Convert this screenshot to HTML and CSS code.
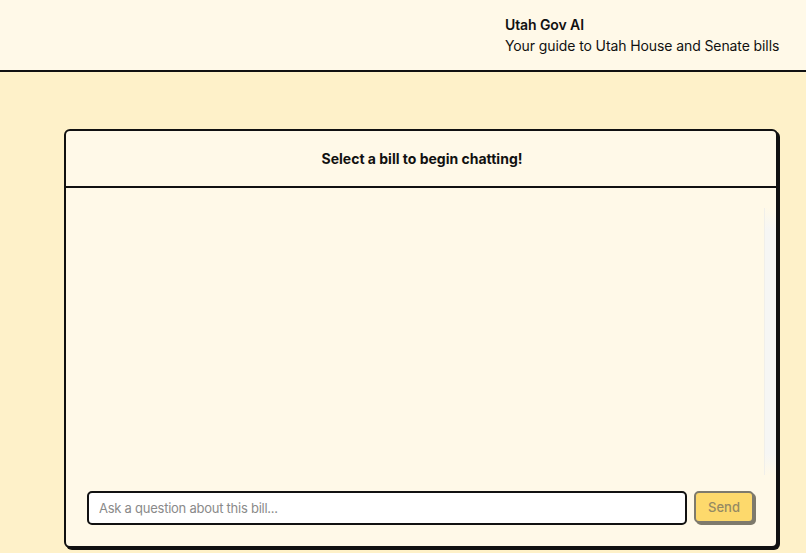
FILE: index.html
```html
<!DOCTYPE html>
<html lang="en">
<head>
  <meta charset="UTF-8" />
  <meta name="viewport" content="width=device-width, initial-scale=1.0"/>
  <title>Utah Gov AI</title>
  <link rel="stylesheet" href="styles.css">
</head>
<body>
  <!-- Top bar -->
  <header class="topbar">
    <div class="brand">
      <div class="brand-name">Utah Gov AI</div>
      <div class="brand-tag">Your guide to Utah House and Senate bills</div>
    </div>
  </header>

  <!-- Chat panel -->
  <main class="page">
    <section class="chat">
      <div class="chat-head">Select a bill to begin chatting!</div>
      <div class="chat-body">
        <div class="messages"></div>
        <div class="scroll-track"></div>
      </div>
      <form class="chat-form">
        <input class="chat-input" type="text" placeholder="Ask a question about this bill...">
        <button class="send-button" type="button" disabled>Send</button>
      </form>
    </section>
  </main>
</body>
</html>
```

FILE: styles.css
```css
* { box-sizing: border-box; margin: 0; padding: 0; }

body {
  font-family: Inter, "Noto Sans", sans-serif;
  background: #fef1c9;
  color: #111;
  height: 100vh;
  overflow: hidden;
}

.topbar {
  height: 72px;
  background: #fff9e8;
  border-bottom: 2px solid #111;
  display: flex;
  padding: 14px 0 0 505px;
}

.brand {
  font-size: 14px;
  line-height: 21px;
  white-space: nowrap;
  letter-spacing: -0.1px;
}

.brand-name { font-weight: 600; }

.page {
  padding: 57px 28px 0 64px;
}

.chat {
  height: 419px;
  background: #fff9e8;
  border: 2px solid #111;
  border-radius: 6px;
  box-shadow: 2px 2px 0 #111;
  display: flex;
  flex-direction: column;
}

.chat-head {
  height: 57px;
  border-bottom: 2px solid #111;
  display: flex;
  align-items: center;
  justify-content: center;
  font-size: 14px;
  font-weight: 700;
  padding-left: 2px;
}

.chat-body {
  flex: 1;
  display: flex;
  padding-top: 20px;
  padding-bottom: 16px;
}

.messages { flex: 1; }

.scroll-track {
  width: 12px;
  background: linear-gradient(to bottom, #fff9e8, #f6f6f4 8%, #f6f6f4 92%, #fff9e8);
  border-left: 1px solid #f0efea;
}

.chat-form {
  display: flex;
  gap: 7px;
  padding: 0 22px 21px 21px;
}

.chat-input {
  flex: 1;
  height: 34px;
  border: 2px solid #111;
  border-radius: 5px;
  background: #fff;
  padding: 0 10px;
  font-family: inherit;
  font-size: 13px;
  letter-spacing: -0.25px;
  color: #111;
  outline: none;
}

.chat-input::placeholder { color: #8a8a8a; }

.send-button {
  width: 60px;
  height: 32px;
  background: #fdd96c;
  border: 2px solid #7e7a6c;
  border-radius: 5px;
  box-shadow: 2px 2px 0 #7e7a6c;
  font-family: inherit;
  font-size: 13px;
  font-weight: 500;
  color: #958a63;
}
```
